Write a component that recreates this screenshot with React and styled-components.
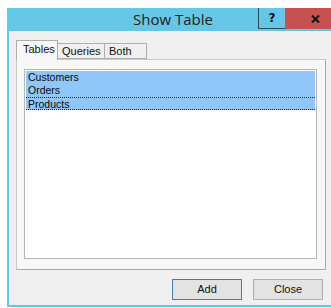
import React from 'react';
import styled, { createGlobalStyle } from "styled-components";

const GlobalStyle = createGlobalStyle`
  html, body {
    margin: 0;
    padding: 0;
    background: #ffffff;
    overflow: hidden;
  }
  body {
    font-family: "Liberation Sans", Arial, sans-serif;
  }
`;

const Page = styled.div`
  width: 331px;
  height: 308px;
  padding: 8px 0 0 7px;
  box-sizing: border-box;
  overflow: hidden;
`;

const Window = styled.div`
  width: 340px;
  height: 299px;
  box-sizing: border-box;
  border: 2px solid #66c6e6;
  border-top: none;
  background: #f0f0f0;
  display: flex;
  flex-direction: column;
`;

const TitleBar = styled.div`
  height: 23px;
  background: #66c6e6;
  display: flex;
  align-items: flex-start;
`;

const Title = styled.div`
  flex: 1;
  text-align: center;
  font-family: "Open Sans", "Noto Sans", sans-serif;
  font-size: 15px;
  line-height: 22px;
  color: #1e1e1e;
  padding-left: 79px;
`;

const CaptionButton = styled.div`
  width: ${(p) => p.$w}px;
  height: 21px;
  box-sizing: border-box;
  display: flex;
  align-items: center;
  justify-content: center;
  background: ${(p) => (p.$danger ? "#c75050" : "transparent")};
  border-left: ${(p) => (p.$danger ? "none" : "1px solid #2a4a5a")};
  border-bottom: ${(p) => (p.$danger ? "none" : "1px solid #2a4a5a")};
  font-family: "DejaVu Sans", sans-serif;
  font-weight: bold;
  font-size: 12px;
  color: #111;
`;

const Body = styled.div`
  flex: 1;
  display: flex;
  flex-direction: column;
  padding: 8px 0 0 7px;
`;

const TabRow = styled.div`
  display: flex;
  align-items: flex-end;
  height: 20px;
  position: relative;
  z-index: 1;
`;

const Tab = styled.div`
  width: ${(p) => p.$w}px;
  box-sizing: border-box;
  height: ${(p) => (p.$active ? 20 : 16)}px;
  padding-left: ${(p) => (p.$active ? 6 : 4)}px;
  margin-bottom: ${(p) => (p.$active ? -1 : 0)}px;
  font-size: 11px;
  line-height: ${(p) => (p.$active ? 17 : 15)}px;
  color: #111;
  background: ${(p) => (p.$active ? "#f7f7f7" : "#f0f0f0")};
  border: 1px solid #adadad;
  border-bottom: ${(p) => (p.$active ? "none" : "1px solid #adadad")};
  border-left: ${(p) => (p.$first || p.$active ? "1px solid #adadad" : "none")};
`;

const Panel = styled.div`
  width: 310px;
  height: 211px;
  box-sizing: border-box;
  border: 1px solid #c9c9c9;
  border-bottom-color: #a8a8a8;
  border-right-color: #a8a8a8;
  background: #f7f7f7;
  padding: 9px 8px 10px 7px;
`;

const ListBox = styled.div`
  height: 100%;
  box-sizing: border-box;
  background: #ffffff;
  border: 1px solid #b5b5b5;
  padding: 1px;
`;

const Item = styled.div`
  height: 13px;
  box-sizing: border-box;
  padding-left: 2px;
  font-size: 10.5px;
  line-height: 12px;
  color: #0a0a0a;
  background: #91c6f9;
  border-bottom: ${(p) => (p.$focus ? "1px dotted #222" : "none")};
  border-top: ${(p) => (p.$focus ? "1px dotted #222" : "none")};
`;

const ButtonRow = styled.div`
  display: flex;
  gap: 11px;
  padding: 9px 0 0 156px;
`;

const Button = styled.div`
  width: ${(p) => p.$w}px;
  height: 21px;
  box-sizing: border-box;
  border: 1px solid ${(p) => (p.$default ? "#3c80b8" : "#adadad")};
  background: #e3e3e3;
  font-size: 11px;
  line-height: 19px;
  text-align: center;
  color: #111;
`;

const App = () => {
  return (
    <Page>
      <GlobalStyle />
      <Window>
        <TitleBar>
          <Title>Show Table</Title>
          <CaptionButton $w={27}>?</CaptionButton>
          <CaptionButton $w={60} $danger>
            <svg width="9" height="8" viewBox="0 0 9 8">
              <path d="M1 0.5 L8 7.5 M8 0.5 L1 7.5" stroke="#111" strokeWidth="2" />
            </svg>
          </CaptionButton>
        </TitleBar>
        <Body>
          <TabRow>
            <Tab $w={42} $active $first>Tables</Tab>
            <Tab $w={47}>Queries</Tab>
            <Tab $w={42}>Both</Tab>
          </TabRow>
          <Panel>
            <ListBox>
              <Item>Customers</Item>
              <Item>Orders</Item>
              <Item $focus>Products</Item>
            </ListBox>
          </Panel>
          <ButtonRow>
            <Button $w={70} $default>Add</Button>
            <Button $w={70}>Close</Button>
          </ButtonRow>
        </Body>
      </Window>
    </Page>
  );
};

export default App;
